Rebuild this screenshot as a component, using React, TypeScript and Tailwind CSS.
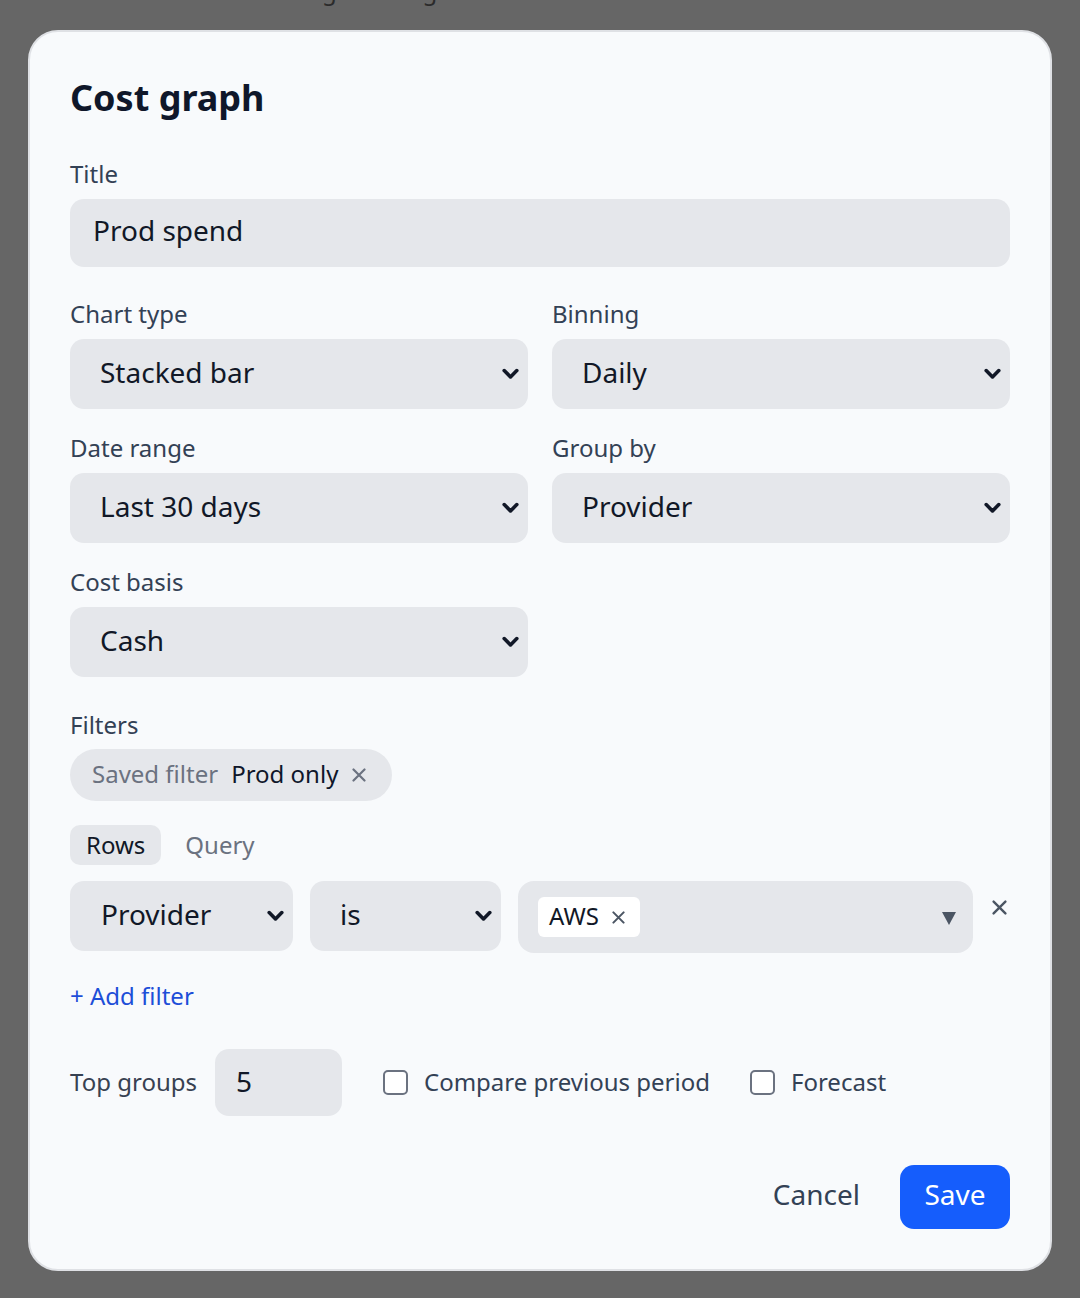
import { ReactNode } from 'react';

function Chevron() {
  return (
    <svg width="17" height="12" viewBox="0 0 17 12" fill="none" className="shrink-0">
      <polyline points="2.2,2.6 8.5,8.9 14.8,2.6" stroke="#111827" strokeWidth="3.6" strokeLinecap="round" strokeLinejoin="round" />
    </svg>
  );
}

function Cross({ size, color, width = 2.2 }: { size: number; color: string; width?: number }) {
  return (
    <svg width={size} height={size} viewBox="0 0 14 14" fill="none" className="shrink-0">
      <path d="M1.5 1.5 L12.5 12.5 M12.5 1.5 L1.5 12.5" stroke={color} strokeWidth={width} strokeLinecap="round" />
    </svg>
  );
}

function Label({ children }: { children: ReactNode }) {
  return <div className="text-[24px] leading-[32px] text-[#334155]">{children}</div>;
}

function SelectBox({ value, className = '' }: { value: string; className?: string }) {
  return (
    <div
      className={`flex h-[70px] items-center justify-between rounded-[14px] bg-[#e5e7eb] pb-[4px] pl-[30px] pr-[9px] text-[28px] text-[#111827] ${className}`}
    >
      <span>{value}</span>
      <span className="pt-[4px]">
        <Chevron />
      </span>
    </div>
  );
}

function Field({ label, value }: { label: string; value: string }) {
  return (
    <div>
      <Label>{label}</Label>
      <SelectBox value={value} className="mt-[9px]" />
    </div>
  );
}

function Checkbox({ label }: { label: string }) {
  return (
    <label className="flex items-center gap-[16px]">
      <span className="h-[25px] w-[25px] rounded-[5px] border-2 border-[#6b7280] bg-white" />
      <span className="pb-[2px] text-[24px] text-[#334155]">{label}</span>
    </label>
  );
}

export default function App() {
  return (
    <div className="min-h-screen bg-[#666666] px-[28px] pb-[28px] font-['Noto_Sans',sans-serif]">
      {/* page heading behind the dialog, scrolled mostly out of view */}
      <div className="h-[30px] overflow-hidden">
        <p className="-mt-[25px] pl-[229px] text-[24px] leading-[32px] text-[#2b2b2b]">Settings · Billing</p>
      </div>

      <div className="rounded-[30px] border-2 border-[#dfe1e5] bg-[#f8fafc] p-[40px]">
        <h2 className="text-[36px] font-bold leading-[52px] text-[#0f172a]">Cost graph</h2>

        <div className="mt-[34px]">
          <Label>Title</Label>
          <div className="mt-[9px] flex h-[68px] items-center rounded-[14px] bg-[#e5e7eb] pb-[6px] pl-[23px] text-[28px] text-[#111827]">
            Prod spend
          </div>
        </div>

        <div className="mt-[31px] grid grid-cols-2 gap-x-[24px] gap-y-[23px]">
          <Field label="Chart type" value="Stacked bar" />
          <Field label="Binning" value="Daily" />
          <Field label="Date range" value="Last 30 days" />
          <Field label="Group by" value="Provider" />
          <Field label="Cost basis" value="Cash" />
        </div>

        <div className="mt-[32px]">
          <Label>Filters</Label>
          <div className="mt-[8px] inline-flex h-[52px] items-center rounded-full bg-[#e5e7eb] pb-[3px] pl-[22px] pr-[26px] text-[24px]">
            <span className="text-[#6b7280]">Saved filter</span>
            <span className="ml-[13px] text-[#0f172a]">Prod only</span>
            <span className="ml-[14px] pt-[3px]">
              <Cross size={14} color="#6b7280" />
            </span>
          </div>
        </div>

        <div className="mt-[24px] flex gap-[7px] text-[24px]">
          <button className="flex h-[40px] items-center rounded-[10px] bg-[#e5e7eb] px-[16px] pb-[1px] text-[#111827]">Rows</button>
          <button className="flex h-[40px] items-center px-[17px] pb-[1px] text-[#6b7280]">Query</button>
        </div>

        <div className="mt-[16px] flex items-start">
          <SelectBox value="Provider" className="w-[223px] pl-[31px] pr-[8px]" />
          <SelectBox value="is" className="ml-[17px] w-[191px] pr-[8px]" />
          <div className="ml-[17px] flex h-[72px] flex-1 items-center justify-between rounded-[16px] bg-[#e5e7eb] pl-[20px] pr-[17px]">
            <span className="flex h-[40px] w-[102px] items-center rounded-[6px] bg-white pl-[11px] text-[24px] text-[#111827]">
              <span className="pb-[2px]">AWS</span>
              <span className="ml-[13px]">
                <Cross size={13} color="#4b5563" />
              </span>
            </span>
            <svg width="14" height="14" viewBox="0 0 14 14" className="mt-[2px]">
              <polygon points="0,1 14,1 7,14" fill="#4b5563" />
            </svg>
          </div>
          <button className="ml-[19px] mr-[3px] pt-[19px]">
            <Cross size={15} color="#4b5563" />
          </button>
        </div>

        <div className="mt-[27px] text-[24px] leading-[32px] text-[#1d4ed8]">+ Add filter</div>

        <div className="mt-[37px] flex items-center">
          <span className="pb-[2px] text-[24px] text-[#374151]">Top groups</span>
          <div className="ml-[18px] flex h-[67px] w-[127px] items-center rounded-[14px] bg-[#e5e7eb] pb-[4px] pl-[21px] text-[28px] text-[#111827]">
            5
          </div>
          <div className="ml-[41px]">
            <Checkbox label="Compare previous period" />
          </div>
          <div className="ml-[40px]">
            <Checkbox label="Forecast" />
          </div>
        </div>

        <div className="mt-[49px] flex items-center justify-end gap-[24px]">
          <button className="px-[16px] pb-[6px] text-[28px] text-[#334155]">Cancel</button>
          <button className="flex h-[64px] w-[110px] items-center justify-center rounded-[14px] bg-[#155dfc] pb-[7px] text-[28px] text-white">
            Save
          </button>
        </div>
      </div>
    </div>
  );
}
